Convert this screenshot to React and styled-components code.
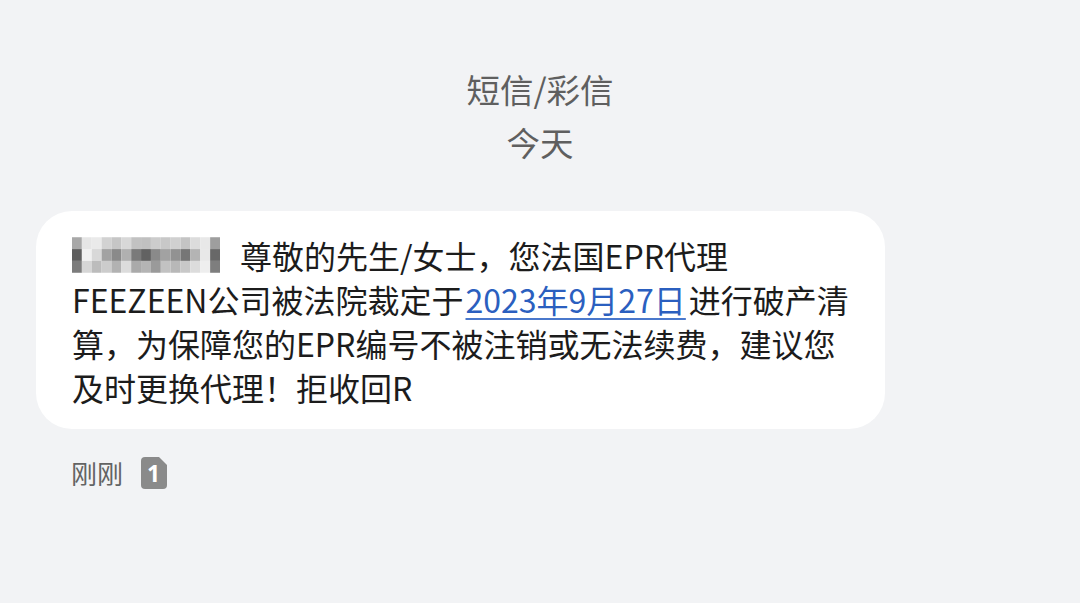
import React from "react";
import styled, { createGlobalStyle } from "styled-components";

const GlobalStyle = createGlobalStyle`
  html, body {
    margin: 0;
    padding: 0;
    background: #f2f3f5;
  }
  body {
    font-family: "Noto Sans CJK SC", "Noto Sans", sans-serif;
  }
`;

const blurRows = [
  ["#a8a8a8", "#e6e6e6", "#eaeaea", "#d2d2d2", "#c6c6c6", "#d8d8d8", "#c2c2c2", "#c0c0c0", "#cccccc", "#c8c8c8", "#d0d0d0", "#c4c4c4", "#dcdcdc", "#e8e8e8", "#9e9e9e"],
  ["#5e5e5e", "#f0f0f0", "#d8d8d8", "#a2a2a2", "#8a8a8a", "#b0b0b0", "#7a7a7a", "#626262", "#8a8a8a", "#a2a2a2", "#929292", "#767676", "#b4b4b4", "#e8e8e8", "#686868"],
  ["#7c7c7c", "#d6d6d6", "#bcbcbc", "#cccccc", "#b2b2b2", "#dcdcdc", "#aaaaaa", "#b4b4b4", "#9a9a9a", "#c2c2c2", "#b8b8b8", "#c8c8c8", "#dcdcdc", "#eeeeee", "#7e7e7e"],
];

function BlurredSender() {
  return (
    <Blur width="148" height="36" viewBox="0 0 150 36">
      {blurRows.map((row, r) =>
        row.map((c, i) => (
          <rect key={r + "-" + i} x={i * 10} y={r * 12} width="10" height="12" fill={c} />
        ))
      )}
    </Blur>
  );
}

function SimBadge() {
  return (
    <Badge width="26" height="32" viewBox="0 0 26 32">
      <path d="M4 0 H18 L26 8 V28 Q26 32 22 32 H4 Q0 32 0 28 V4 Q0 0 4 0 Z" fill="#8a8a8a" />
      <text x="12.5" y="25" textAnchor="middle" fontSize="23" fontWeight="700" fill="#fff" fontFamily="Noto Sans, sans-serif">
        1
      </text>
    </Badge>
  );
}

function App() {
  return (
    <Page>
      <GlobalStyle />
      <Header>
        <HeaderLine>短信/彩信</HeaderLine>
        <HeaderLine>今天</HeaderLine>
      </Header>
      <Bubble>
        <Line>
          <BlurredSender />
          尊敬的先生/女士，您法国EPR代理
        </Line>
        <Line>
          FEEZEEN公司被法院裁定于<DateLink>2023年9月27日</DateLink>进行破产清
        </Line>
        <Line>算，为保障您的EPR编号不被注销或无法续费，建议您</Line>
        <Line>及时更换代理！拒收回R</Line>
      </Bubble>
      <Meta>
        <Time>刚刚</Time>
        <SimBadge />
      </Meta>
    </Page>
  );
}

export default App;

const Page = styled.div`
  width: 1080px;
  height: 603px;
  overflow: hidden;
  background: #f2f3f5;
  display: flex;
  flex-direction: column;
`;

const Header = styled.div`
  padding-top: 62px;
  display: flex;
  flex-direction: column;
  align-items: center;
`;

const HeaderLine = styled.div`
  font-size: 33.5px;
  line-height: 53px;
  color: #5f5f5f;
`;

const Bubble = styled.div`
  margin: 43px 0 0 36px;
  width: 849px;
  box-sizing: border-box;
  padding: 22px 20px 20px 36px;
  background: #ffffff;
  border-radius: 36px;
`;

const Line = styled.div`
  font-size: 32px;
  line-height: 44px;
  color: #1c1c1c;
  white-space: nowrap;
  display: flex;
  align-items: center;
`;

const Blur = styled.svg`
  display: block;
  margin-right: 20px;
  filter: blur(0.5px);
`;

const DateLink = styled.span`
  margin: 0 3px 0 2px;
  color: #2b5fbf;
  text-decoration: underline;
  text-decoration-color: #4a78cc;
  text-decoration-thickness: 2px;
  text-underline-offset: 5px;
`;

const Meta = styled.div`
  display: flex;
  align-items: center;
  gap: 18px;
  margin: 28px 0 0 71px;
`;

const Time = styled.span`
  font-size: 26px;
  line-height: 32px;
  color: #636363;
`;

const Badge = styled.svg`
  display: block;
`;
